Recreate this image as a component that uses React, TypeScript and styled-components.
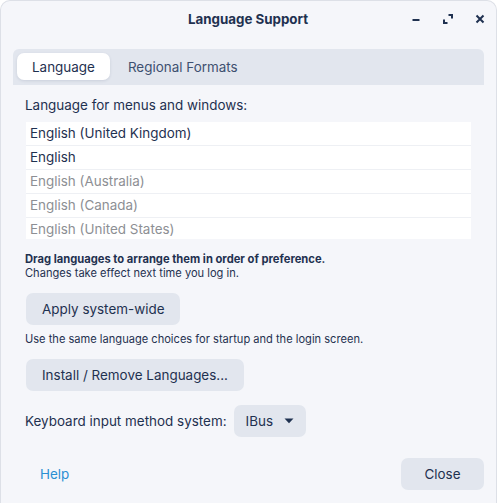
import React from "react";
import styled, { createGlobalStyle } from "styled-components";

const Global = createGlobalStyle`
  html, body { margin: 0; padding: 0; background: #ffffff; }
  body { font-family: Inter, "Noto Sans", sans-serif; -webkit-font-smoothing: antialiased; }
  #root { width: 497px; height: 503px; }
`;

const Window = styled.div`
  box-sizing: border-box;
  width: 497px;
  height: 503px;
  background: #f5f6fa;
  border: 1px solid #dde0e7;
  border-bottom: none;
  border-radius: 10px 10px 0 0;
  display: flex;
  flex-direction: column;
  color: #1f3150;
  font-size: 13.45px;
`;

const TitleBar = styled.div`
  height: 35px;
  position: relative;
  display: flex;
  align-items: center;
  justify-content: center;
`;

const Title = styled.div`
  font-weight: 700;
  font-size: 13.33px;
  color: #1f3150;
  margin-left: -1px;
`;

const Controls = styled.div`
  position: absolute;
  right: 0;
  top: 7px;
  display: flex;
`;

const CtlButton = styled.div`
  width: 32px;
  height: 22px;
  display: flex;
  align-items: center;
  justify-content: center;
`;

const Body = styled.div`
  flex: 1;
  display: flex;
  flex-direction: column;
  padding: 13px 12px 0 12px;
`;

const TabBar = styled.div`
  height: 36px;
  box-sizing: border-box;
  background: #e2e6ee;
  border-radius: 6px 6px 0 0;
  padding: 4px 4px 5px 4px;
  display: flex;
  gap: 3px;
`;

const Tab = styled.div<{ $active?: boolean }>`
  height: 27px;
  display: flex;
  align-items: center;
  padding: 0 15px;
  border-radius: 7px;
  font-size: 13.45px;
  color: ${(p) => (p.$active ? "#1f3150" : "#3e5070")};
  background: ${(p) => (p.$active ? "#ffffff" : "transparent")};
  box-shadow: ${(p) => (p.$active ? "0 1px 3px rgba(30,50,90,0.12)" : "none")};
`;

const Panel = styled.div`
  display: flex;
  flex-direction: column;
  padding: 12px 13px 0 13px;
`;

const Label = styled.div`
  font-size: 13.45px;
  line-height: 17px;
  color: #1f3150;
  margin-left: -1px;
`;

const List = styled.div`
  margin-top: 8px;
  height: 117px;
  overflow: hidden;
  background: #ffffff;
  display: flex;
  flex-direction: column;
`;

const Row = styled.div<{ $dim?: boolean }>`
  flex: none;
  box-sizing: border-box;
  height: 24px;
  border-bottom: 1px solid #eef0f4;
  padding: 0 4px 1px 4px;
  display: flex;
  align-items: center;
  font-size: 13.45px;
  color: ${(p) => (p.$dim ? "#8d8f94" : "#1f3150")};
`;

const Hint = styled.div<{ $bold?: boolean; $top?: number }>`
  font-size: ${(p) => (p.$bold ? 11.2 : 11.1)}px;
  line-height: 14px;
  margin-top: ${(p) => p.$top ?? 0}px;
  margin-left: -1px;
  font-weight: ${(p) => (p.$bold ? 700 : 400)};
  color: #1f3150;
`;

const Button = styled.div<{ $top?: number }>`
  align-self: flex-start;
  height: 32px;
  box-sizing: border-box;
  margin-top: ${(p) => p.$top ?? 0}px;
  padding: 0 16px;
  border-radius: 7px;
  background: #e2e6ee;
  display: flex;
  align-items: center;
  font-size: 13.45px;
  color: #1f3150;
`;

const KeyRow = styled.div`
  margin-top: 14px;
  display: flex;
  align-items: center;
  gap: 7px;
`;

const Dropdown = styled.div`
  height: 32px;
  box-sizing: border-box;
  padding: 0 12px;
  border-radius: 7px;
  background: #e2e6ee;
  display: flex;
  align-items: center;
  gap: 11px;
  font-size: 13.45px;
  color: #1f3150;
`;

const Footer = styled.div`
  margin-top: auto;
  display: flex;
  align-items: center;
  justify-content: space-between;
  padding: 0 0 13px 13px;
`;

const LinkButton = styled.div`
  height: 32px;
  display: flex;
  align-items: center;
  padding: 0 14px;
  font-size: 13.45px;
  color: #2b8fd3;
`;

const CloseButton = styled(Button)`
  width: 83px;
  padding: 0;
  justify-content: center;
`;

const stroke = "#1f3150";

export default function App() {
  return (
    <>
      <Global />
      <Window>
        <TitleBar>
          <Title>Language Support</Title>
          <Controls>
            <CtlButton>
              <svg width="10" height="10" viewBox="0 0 10 10">
                <path d="M1.5 6h7" stroke={stroke} strokeWidth="2" />
              </svg>
            </CtlButton>
            <CtlButton>
              <svg width="10" height="10" viewBox="0 0 10 10">
                <path d="M5.5 1h3.5v3.5" fill="none" stroke={stroke} strokeWidth="2" />
                <path d="M1 5.5v3.5h3.5" fill="none" stroke={stroke} strokeWidth="2" />
              </svg>
            </CtlButton>
            <CtlButton>
              <svg width="10" height="10" viewBox="0 0 10 10">
                <path d="M1.5 1.5l7 7M8.5 1.5l-7 7" stroke={stroke} strokeWidth="2" />
              </svg>
            </CtlButton>
          </Controls>
        </TitleBar>
        <Body>
          <TabBar>
            <Tab $active>Language</Tab>
            <Tab>Regional Formats</Tab>
          </TabBar>
          <Panel>
            <Label>Language for menus and windows:</Label>
            <List>
              <Row>English (United Kingdom)</Row>
              <Row>English</Row>
              <Row $dim>English (Australia)</Row>
              <Row $dim>English (Canada)</Row>
              <Row $dim>English (United States)</Row>
            </List>
            <Hint $bold $top={13}>Drag languages to arrange them in order of preference.</Hint>
            <Hint>Changes take effect next time you log in.</Hint>
            <Button $top={13}>Apply system-wide</Button>
            <Hint $top={7}>Use the same language choices for startup and the login screen.</Hint>
            <Button $top={13}>Install / Remove Languages...</Button>
            <KeyRow>
              <Label>Keyboard input method system:</Label>
              <Dropdown>
                IBus
                <svg width="10" height="6" viewBox="0 0 10 6">
                  <path d="M0.5 0.5h9L5 5.2z" fill={stroke} />
                </svg>
              </Dropdown>
            </KeyRow>
          </Panel>
          <Footer>
            <LinkButton>Help</LinkButton>
            <CloseButton>Close</CloseButton>
          </Footer>
        </Body>
      </Window>
    </>
  );
}
